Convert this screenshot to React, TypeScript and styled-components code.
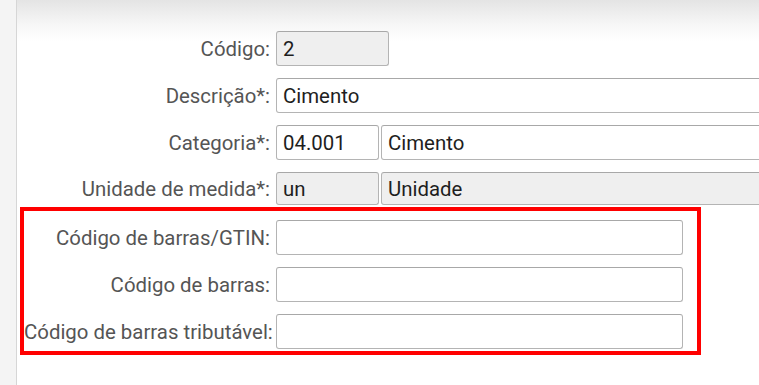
import React from "react";
import styled, { createGlobalStyle } from "styled-components";

const Global = createGlobalStyle`
  html, body { margin: 0; padding: 0; background: #fff; }
  body { font-family: Roboto, "Liberation Sans", Arial, sans-serif; }
  * { box-sizing: border-box; }
`;

const Page = styled.div`
  display: flex;
  width: 759px;
  height: 385px;
  overflow: hidden;
`;

const SideStrip = styled.div`
  width: 17px;
  flex: none;
  background: #f4f4f4;
  border-right: 1px solid #d6d6d6;
`;

const Main = styled.div`
  flex: 1;
  min-width: 0;
  background: linear-gradient(to bottom, #e4e4e4 0px, #f6f6f6 24px, #ffffff 42px);
  padding-top: 31px;
  display: flex;
  flex-direction: column;
  gap: 12px;
  overflow: hidden;
`;

const Row = styled.div<{ $labelWidth?: number; $h?: number }>`
  display: grid;
  grid-template-columns: ${(p) => p.$labelWidth ?? 255}px 1fr;
  column-gap: 4px;
  align-items: center;
  height: ${(p) => p.$h ?? 35}px;
`;

const Label = styled.label`
  text-align: right;
  white-space: nowrap;
  font-size: 20.4px;
  padding-right: 2px;
  color: #555555;
`;

const Fields = styled.div`
  display: flex;
  gap: 2px;
  min-width: 0;
  height: 100%;
`;

const Input = styled.div<{ $w?: number; $disabled?: boolean; $grow?: boolean }>`
  flex: ${(p) => (p.$grow ? "1 0 auto" : "none")};
  width: ${(p) => (p.$w ? `${p.$w}px` : "auto")};
  min-width: ${(p) => (p.$grow ? "600px" : "0")};
  height: 100%;
  border: 1px solid #b4b4b4;
  border-top-color: #a8a8a8;
  border-radius: 3px;
  background: ${(p) => (p.$disabled ? "#efefef" : "#fff")};
  padding: 0 6px;
  display: flex;
  align-items: center;
  font-size: 20.4px;
  color: #1e1e1e;
  white-space: nowrap;
`;

const Highlight = styled.div`
  margin-left: 3px;
  width: 681px;
  border: 4px solid #ff0000;
  margin-top: -10px;
  padding: 9px 0 2px;
  display: flex;
  flex-direction: column;
  gap: 12px;
`;

export default function App() {
  return (
    <>
      <Global />
      <Page>
        <SideStrip />
        <Main>
          <Row>
            <Label>Código:</Label>
            <Fields>
              <Input $w={113} $disabled>2</Input>
            </Fields>
          </Row>
          <Row>
            <Label>Descrição*:</Label>
            <Fields>
              <Input $grow>Cimento</Input>
            </Fields>
          </Row>
          <Row>
            <Label>Categoria*:</Label>
            <Fields>
              <Input $w={103}>04.001</Input>
              <Input $grow>Cimento</Input>
            </Fields>
          </Row>
          <Row $h={33}>
            <Label>Unidade de medida*:</Label>
            <Fields>
              <Input $w={103} $disabled>un</Input>
              <Input $grow $disabled>Unidade</Input>
            </Fields>
          </Row>
          <Highlight>
            <Row $labelWidth={248}>
              <Label>Código de barras/GTIN:</Label>
              <Fields>
                <Input $w={407} />
              </Fields>
            </Row>
            <Row $labelWidth={248}>
              <Label>Código de barras:</Label>
              <Fields>
                <Input $w={407} />
              </Fields>
            </Row>
            <Row $labelWidth={248}>
              <Label>Código de barras tributável:</Label>
              <Fields>
                <Input $w={407} />
              </Fields>
            </Row>
          </Highlight>
        </Main>
      </Page>
    </>
  );
}
